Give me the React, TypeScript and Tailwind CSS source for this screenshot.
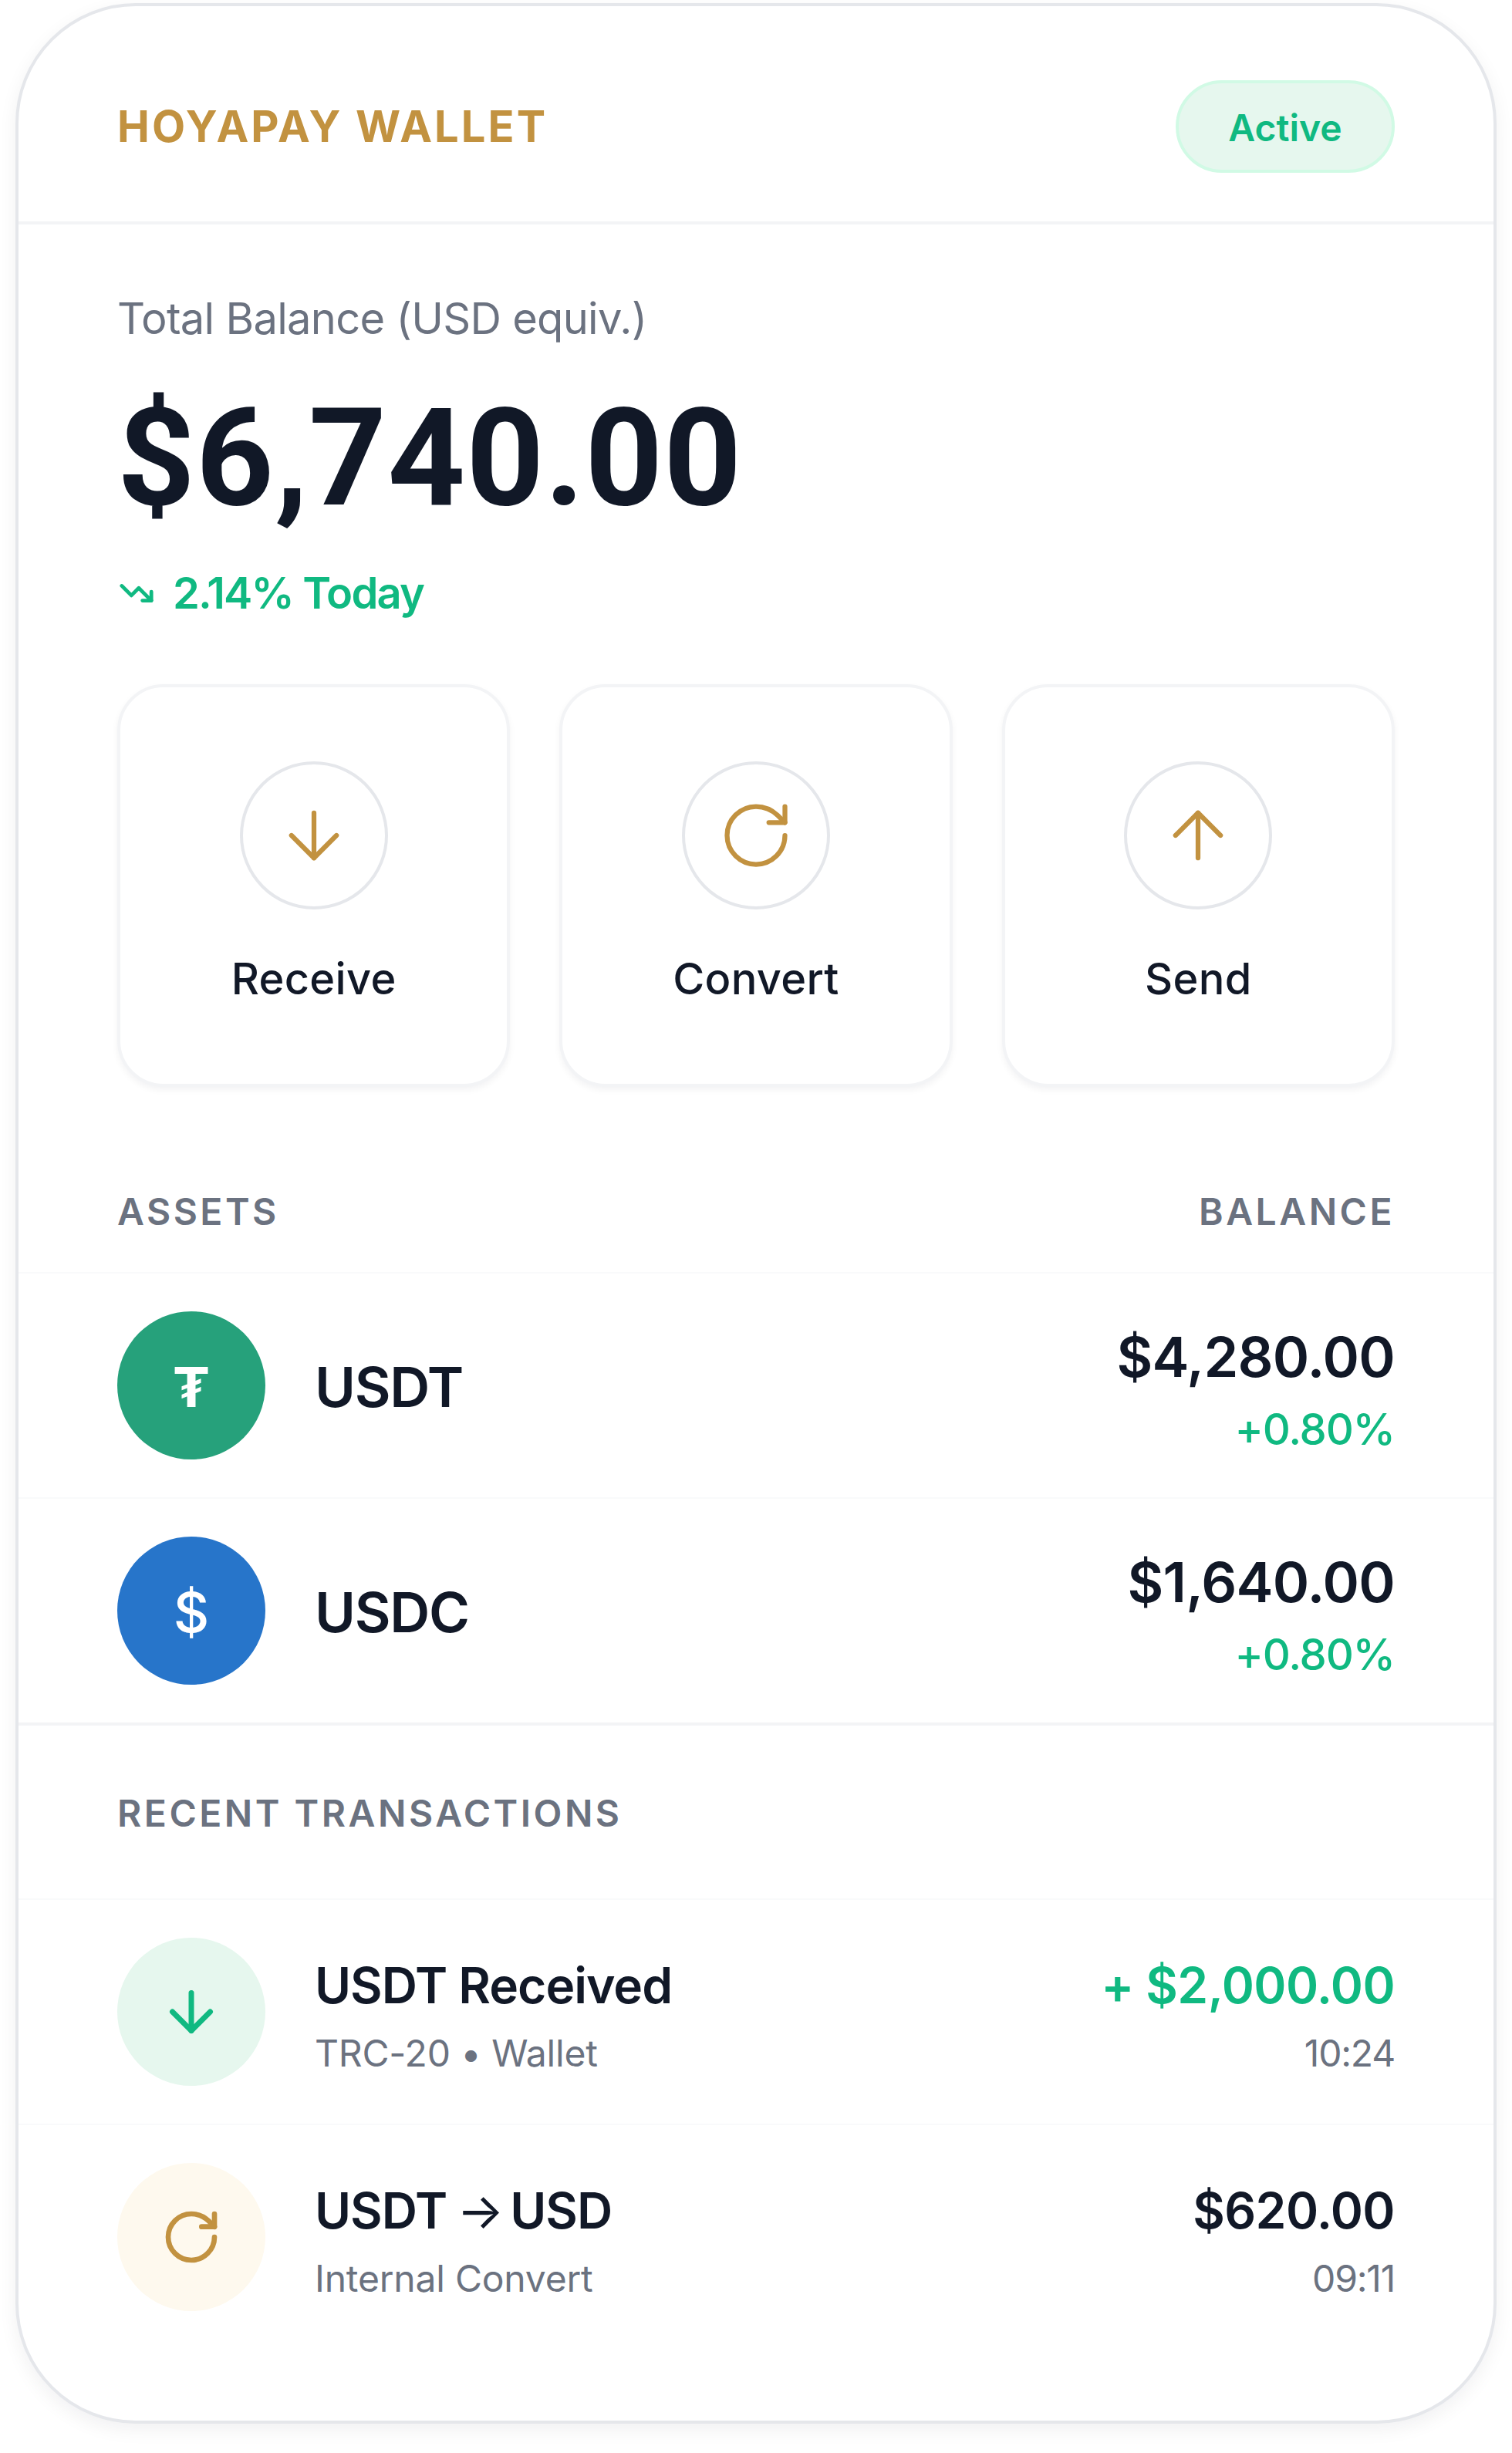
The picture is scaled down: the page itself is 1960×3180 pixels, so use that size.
import { ArrowDown, ArrowUp, RotateCw, TrendingDown } from "lucide-react";

const font = "font-['Inter','Liberation_Sans',sans-serif]";

function Action({ label, icon }: { label: string; icon: React.ReactNode }) {
  return (
    <div className="flex h-[522px] flex-col items-center rounded-[60px] border-4 border-[#f3f4f6] bg-white pt-[96px] shadow-[0_4px_8px_rgba(17,24,39,0.05)]">
      <div className="flex h-[192px] w-[192px] items-center justify-center rounded-full border-4 border-[#e5e7eb] text-[#c29240]">
        {icon}
      </div>
      <div className="mt-[58px] text-[56px] leading-[64px] font-medium tracking-[0.3px] text-[#111827]">{label}</div>
    </div>
  );
}

function AssetRow({ name, amount, color, glyph, glyphClass }: { name: string; amount: string; color: string; glyph: string; glyphClass: string }) {
  return (
    <div className="flex h-[292px] items-center justify-between border-t-2 border-[#f9fafb] px-[128px]">
      <div className="flex items-center gap-[64px]">
        <div className={`flex h-[192px] w-[192px] items-center justify-center rounded-full pt-[4px] text-white ${color} ${glyphClass}`}>{glyph}</div>
        <div className="pt-[4px] text-[72px] leading-[80px] font-semibold tracking-[-1.3px] text-[#111827]">{name}</div>
      </div>
      <div className="pt-[8px] text-right">
        <div className="text-[72px] leading-[88px] font-semibold tracking-[-0.8px] text-[#111827]">{amount}</div>
        <div className="mt-[18px] text-[56px] leading-[64px] font-medium tracking-[-1.2px] text-[#10b981]">+0.80%</div>
      </div>
    </div>
  );
}

function TxRow({ title, sub, amount, time, bg, icon, amountClass }: { title: React.ReactNode; sub: string; amount: string; time: string; bg: string; icon: React.ReactNode; amountClass: string }) {
  return (
    <div className="flex h-[292px] items-center justify-between border-t-2 border-[#f9fafb] px-[128px]">
      <div className="flex items-center gap-[64px]">
        <div className={`flex h-[192px] w-[192px] items-center justify-center rounded-full ${bg}`}>{icon}</div>
        <div className="pt-[14px]">
          <div className="text-[64px] leading-[72px] font-semibold tracking-[-1px] text-[#111827]">{title}</div>
          <div className="mt-[22px] text-[48px] leading-[60px] tracking-[-0.2px] text-[#6b7280]">{sub}</div>
        </div>
      </div>
      <div className="pt-[14px] text-right">
        <div className={`text-[64px] leading-[72px] font-semibold tracking-[-0.6px] ${amountClass}`}>{amount}</div>
        <div className="mt-[22px] text-[48px] leading-[60px] tracking-[-1.2px] text-[#6b7280]">{time}</div>
      </div>
    </div>
  );
}

export default function App() {
  return (
    <div className={`bg-white px-[20px] pt-[4px] pb-[38px] ${font}`}>
      <div className="h-[3138px] overflow-hidden rounded-[156px] border-4 border-[#e5e7eb] bg-white shadow-[0_8px_24px_rgba(17,24,39,0.06)]">
        <div className="flex items-start justify-between border-b-4 border-[#f3f4f6] px-[128px] pt-[96px] pb-[63px]">
          <div className="mt-[24px] text-[56px] leading-[72px] font-bold tracking-[3.1px] text-[#c29240]">HOYAPAY WALLET</div>
          <div className="flex h-[120px] w-[284px] items-center justify-center rounded-full border-4 border-[#d1fae5] bg-[#e6f7ee] pt-[4px] text-[48px] font-semibold text-[#10b981]">Active</div>
        </div>

        <div className="px-[128px] pt-[90px]">
          <div className="text-[56px] leading-[64px] tracking-[-0.7px] text-[#6b7280]">Total Balance (USD equiv.)</div>
          <div className="mt-[49px] font-['Roboto','Inter',sans-serif] text-[176px] leading-[200px] font-bold tracking-[1px] text-[#111827]">$6,740.00</div>
          <div className="mt-[43px] flex h-[64px] items-center gap-[24px] pl-[2px] text-[56px] leading-[64px] font-semibold tracking-[-1.8px] text-[#10b981]">
            <TrendingDown size={46} strokeWidth={2.5} />
            2.14% Today
          </div>
          <div className="mt-[86px] grid grid-cols-3 gap-[64px]">
            <Action label="Receive" icon={<ArrowDown size={100} strokeWidth={1.5} />} />
            <Action label="Convert" icon={<RotateCw size={100} strokeWidth={1.5} />} />
            <Action label="Send" icon={<ArrowUp size={100} strokeWidth={1.5} />} />
          </div>
          <div className="mt-[134px] mb-[50px] flex justify-between text-[48px] leading-[56px] font-semibold tracking-[3.5px] text-[#6b7280]">
            <span>ASSETS</span>
            <span>BALANCE</span>
          </div>
        </div>

        <AssetRow name="USDT" amount="$4,280.00" color="bg-[#26a17b]" glyph="₮" glyphClass="text-[72px] font-bold" />
        <AssetRow name="USDC" amount="$1,640.00" color="bg-[#2775ca]" glyph="$" glyphClass="text-[72px] font-medium" />

        <div className="border-t-4 border-[#f3f4f6] px-[128px] pt-[86px] pb-[82px] text-[48px] leading-[56px] font-semibold tracking-[3.5px] text-[#6b7280]">RECENT TRANSACTIONS</div>

        <TxRow title="USDT Received" sub="TRC-20 • Wallet" amount="+ $2,000.00" time="10:24" bg="bg-[#e6f7ee]" icon={<ArrowDown size={84} strokeWidth={2} className="text-[#10b981]" />} amountClass="text-[#10b981]" />
        <TxRow title={<>USDT<span className="font-normal tracking-[-5px]"> → </span>USD</>} sub="Internal Convert" amount="$620.00" time="09:11" bg="bg-[#fef9ee]" icon={<RotateCw size={80} strokeWidth={2} className="text-[#c29240]" />} amountClass="text-[#111827]" />
      </div>
    </div>
  );
}
